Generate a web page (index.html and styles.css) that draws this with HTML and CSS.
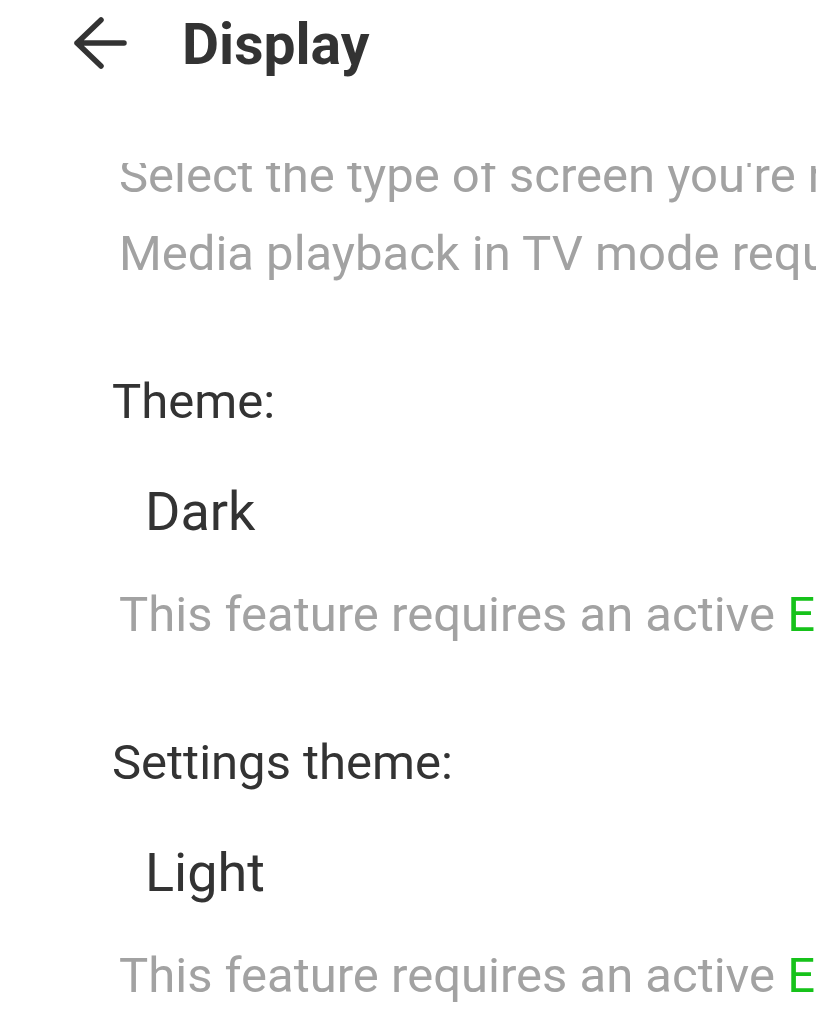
FILE: index.html
```html
<!DOCTYPE html>
<html lang="en">
<head>
<meta charset="utf-8">
<title>Display</title>
<link rel="stylesheet" href="styles.css">
</head>
<body>
<header class="appbar">
  <svg class="back" width="56" height="56" viewBox="0 0 56 56" aria-hidden="true">
    <path d="M5 28 H52 M29 5 L5 28 L29 51" fill="none" stroke="#333333" stroke-width="5.5" stroke-linecap="round" stroke-linejoin="round"/>
  </svg>
  <h1 class="title">Display</h1>
</header>
<main class="content">
  <section class="intro">
    <p class="desc">Select the type of screen you're running the app on.</p>
    <p class="desc">Media playback in TV mode requires an active subscription.</p>
  </section>
  <section class="group">
    <div class="label">Theme:</div>
    <div class="value">Dark</div>
    <p class="desc">This feature requires an active <span class="accent">Emby Premiere</span> subscription.</p>
  </section>
  <section class="group">
    <div class="label">Settings theme:</div>
    <div class="value">Light</div>
    <p class="desc">This feature requires an active <span class="accent">Emby Premiere</span> subscription.</p>
  </section>
</main>
</body>
</html>
```
FILE: styles.css
```css
html, body {
  margin: 0;
  padding: 0;
  background: #ffffff;
  overflow: hidden;
  font-family: Roboto, "Noto Sans", sans-serif;
}

.appbar {
  position: fixed;
  top: 0;
  left: 0;
  right: 0;
  height: 163px;
  background: #ffffff;
  display: flex;
  align-items: flex-start;
  padding-left: 72px;
  padding-top: 15px;
  box-sizing: border-box;
  z-index: 2;
}

.back {
  display: block;
  flex: none;
}

.title {
  margin: -14px 0 0 54px;
  font-size: 57px;
  font-weight: 700;
  line-height: 88px;
  color: #333333;
}

.content {
  padding-top: 137px;
  white-space: nowrap;
  overflow: hidden;
}

.desc {
  margin: 0;
  padding-left: 119px;
  font-size: 49px;
  line-height: 78px;
  color: #a2a2a2;
}

.group {
  margin-top: 70px;
}

.label {
  padding-left: 112px;
  font-size: 49px;
  line-height: 78px;
  color: #333333;
}

.value {
  margin-top: 32px;
  margin-bottom: 25px;
  padding-left: 145px;
  font-size: 54px;
  line-height: 78px;
  color: #333333;
}

.accent {
  color: #16c21a;
}
```
